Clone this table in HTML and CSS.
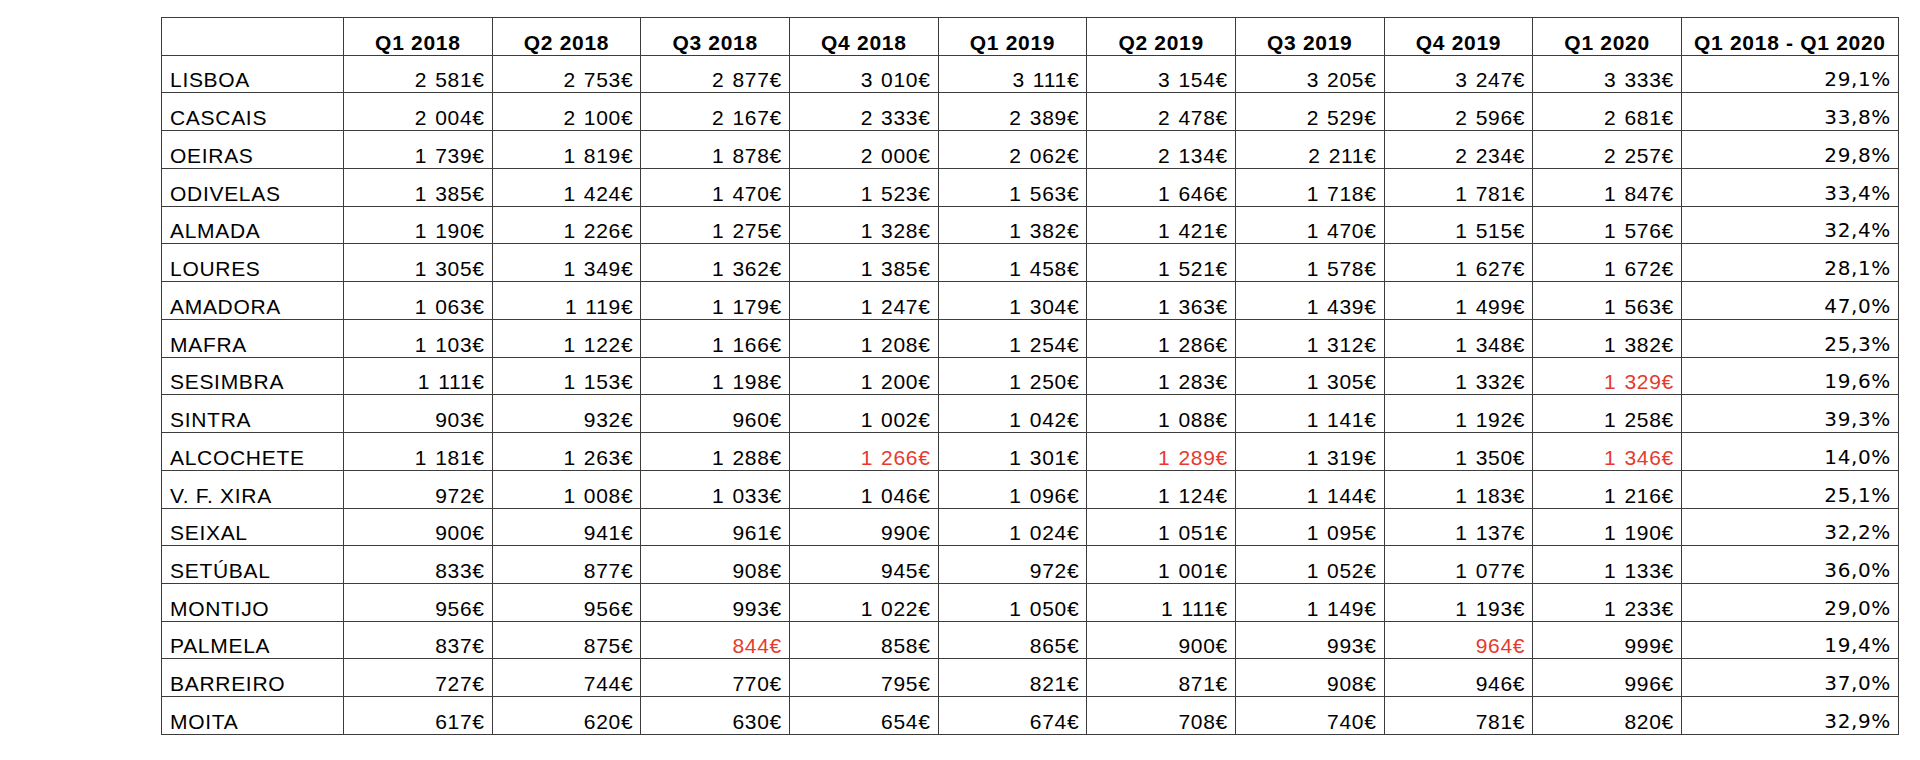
FILE: index.html
```html
<!DOCTYPE html>
<html lang="pt">
<head>
<meta charset="utf-8">
<title>Preços</title>
<link rel="stylesheet" href="styles.css">
</head>
<body>
<div class="page">
<table class="prices">
<colgroup>
<col class="c-name"><col class="c-q"><col class="c-q"><col class="c-q"><col class="c-q"><col class="c-q"><col class="c-q"><col class="c-q"><col class="c-q"><col class="c-q"><col class="c-var">
</colgroup>
<thead>
<tr><th></th><th>Q1 2018</th><th>Q2 2018</th><th>Q3 2018</th><th>Q4 2018</th><th>Q1 2019</th><th>Q2 2019</th><th>Q3 2019</th><th>Q4 2019</th><th>Q1 2020</th><th>Q1 2018 - Q1 2020</th></tr>
</thead>
<tbody>
<tr><td class="name">LISBOA</td><td class="num">2 581€</td><td class="num">2 753€</td><td class="num">2 877€</td><td class="num">3 010€</td><td class="num">3 111€</td><td class="num">3 154€</td><td class="num">3 205€</td><td class="num">3 247€</td><td class="num">3 333€</td><td class="pct">29,1%</td></tr>
<tr><td class="name">CASCAIS</td><td class="num">2 004€</td><td class="num">2 100€</td><td class="num">2 167€</td><td class="num">2 333€</td><td class="num">2 389€</td><td class="num">2 478€</td><td class="num">2 529€</td><td class="num">2 596€</td><td class="num">2 681€</td><td class="pct">33,8%</td></tr>
<tr><td class="name">OEIRAS</td><td class="num">1 739€</td><td class="num">1 819€</td><td class="num">1 878€</td><td class="num">2 000€</td><td class="num">2 062€</td><td class="num">2 134€</td><td class="num">2 211€</td><td class="num">2 234€</td><td class="num">2 257€</td><td class="pct">29,8%</td></tr>
<tr><td class="name">ODIVELAS</td><td class="num">1 385€</td><td class="num">1 424€</td><td class="num">1 470€</td><td class="num">1 523€</td><td class="num">1 563€</td><td class="num">1 646€</td><td class="num">1 718€</td><td class="num">1 781€</td><td class="num">1 847€</td><td class="pct">33,4%</td></tr>
<tr><td class="name">ALMADA</td><td class="num">1 190€</td><td class="num">1 226€</td><td class="num">1 275€</td><td class="num">1 328€</td><td class="num">1 382€</td><td class="num">1 421€</td><td class="num">1 470€</td><td class="num">1 515€</td><td class="num">1 576€</td><td class="pct">32,4%</td></tr>
<tr><td class="name">LOURES</td><td class="num">1 305€</td><td class="num">1 349€</td><td class="num">1 362€</td><td class="num">1 385€</td><td class="num">1 458€</td><td class="num">1 521€</td><td class="num">1 578€</td><td class="num">1 627€</td><td class="num">1 672€</td><td class="pct">28,1%</td></tr>
<tr><td class="name">AMADORA</td><td class="num">1 063€</td><td class="num">1 119€</td><td class="num">1 179€</td><td class="num">1 247€</td><td class="num">1 304€</td><td class="num">1 363€</td><td class="num">1 439€</td><td class="num">1 499€</td><td class="num">1 563€</td><td class="pct">47,0%</td></tr>
<tr><td class="name">MAFRA</td><td class="num">1 103€</td><td class="num">1 122€</td><td class="num">1 166€</td><td class="num">1 208€</td><td class="num">1 254€</td><td class="num">1 286€</td><td class="num">1 312€</td><td class="num">1 348€</td><td class="num">1 382€</td><td class="pct">25,3%</td></tr>
<tr><td class="name">SESIMBRA</td><td class="num">1 111€</td><td class="num">1 153€</td><td class="num">1 198€</td><td class="num">1 200€</td><td class="num">1 250€</td><td class="num">1 283€</td><td class="num">1 305€</td><td class="num">1 332€</td><td class="num down">1 329€</td><td class="pct">19,6%</td></tr>
<tr><td class="name">SINTRA</td><td class="num">903€</td><td class="num">932€</td><td class="num">960€</td><td class="num">1 002€</td><td class="num">1 042€</td><td class="num">1 088€</td><td class="num">1 141€</td><td class="num">1 192€</td><td class="num">1 258€</td><td class="pct">39,3%</td></tr>
<tr><td class="name">ALCOCHETE</td><td class="num">1 181€</td><td class="num">1 263€</td><td class="num">1 288€</td><td class="num down">1 266€</td><td class="num">1 301€</td><td class="num down">1 289€</td><td class="num">1 319€</td><td class="num">1 350€</td><td class="num down">1 346€</td><td class="pct">14,0%</td></tr>
<tr><td class="name">V. F. XIRA</td><td class="num">972€</td><td class="num">1 008€</td><td class="num">1 033€</td><td class="num">1 046€</td><td class="num">1 096€</td><td class="num">1 124€</td><td class="num">1 144€</td><td class="num">1 183€</td><td class="num">1 216€</td><td class="pct">25,1%</td></tr>
<tr><td class="name">SEIXAL</td><td class="num">900€</td><td class="num">941€</td><td class="num">961€</td><td class="num">990€</td><td class="num">1 024€</td><td class="num">1 051€</td><td class="num">1 095€</td><td class="num">1 137€</td><td class="num">1 190€</td><td class="pct">32,2%</td></tr>
<tr><td class="name">SETÚBAL</td><td class="num">833€</td><td class="num">877€</td><td class="num">908€</td><td class="num">945€</td><td class="num">972€</td><td class="num">1 001€</td><td class="num">1 052€</td><td class="num">1 077€</td><td class="num">1 133€</td><td class="pct">36,0%</td></tr>
<tr><td class="name">MONTIJO</td><td class="num">956€</td><td class="num">956€</td><td class="num">993€</td><td class="num">1 022€</td><td class="num">1 050€</td><td class="num">1 111€</td><td class="num">1 149€</td><td class="num">1 193€</td><td class="num">1 233€</td><td class="pct">29,0%</td></tr>
<tr><td class="name">PALMELA</td><td class="num">837€</td><td class="num">875€</td><td class="num down">844€</td><td class="num">858€</td><td class="num">865€</td><td class="num">900€</td><td class="num">993€</td><td class="num down">964€</td><td class="num">999€</td><td class="pct">19,4%</td></tr>
<tr><td class="name">BARREIRO</td><td class="num">727€</td><td class="num">744€</td><td class="num">770€</td><td class="num">795€</td><td class="num">821€</td><td class="num">871€</td><td class="num">908€</td><td class="num">946€</td><td class="num">996€</td><td class="pct">37,0%</td></tr>
<tr><td class="name">MOITA</td><td class="num">617€</td><td class="num">620€</td><td class="num">630€</td><td class="num">654€</td><td class="num">674€</td><td class="num">708€</td><td class="num">740€</td><td class="num">781€</td><td class="num">820€</td><td class="pct">32,9%</td></tr>
</tbody>
</table>
</div>
</body>
</html>
```

FILE: styles.css
```css
html, body {
  margin: 0;
  padding: 0;
  background: #ffffff;
}

.page {
  padding: 17px 0 0 161px;
}

.prices {
  border-collapse: collapse;
  table-layout: fixed;
  width: 1737px;
  font-family: "Liberation Sans", Arial, sans-serif;
  font-size: 21px;
  letter-spacing: 0.7px;
  color: #000000;
}

.c-name { width: 182px; }
.c-q { width: 148.67px; }
.c-var { width: 217px; }

.prices th,
.prices td {
  border: 1px solid #3c3c3c;
  height: 37.74px;
  box-sizing: border-box;
  padding: 0 7px 2px 8px;
  line-height: 21px;
  vertical-align: bottom;
  white-space: nowrap;
  overflow: hidden;
}

.prices th {
  font-weight: bold;
  text-align: center;
  padding-left: 2px;
  padding-right: 2px;
}

.prices td.name {
  text-align: left;
}

.prices td.num {
  text-align: right;
  word-spacing: 1.5px;
}

.prices td.pct {
  text-align: right;
  font-family: "DejaVu Sans", Verdana, sans-serif;
  font-size: 20px;
  letter-spacing: 0.6px;
  padding-right: 7px;
}

.prices td.down {
  color: #e63a2e;
}
```
